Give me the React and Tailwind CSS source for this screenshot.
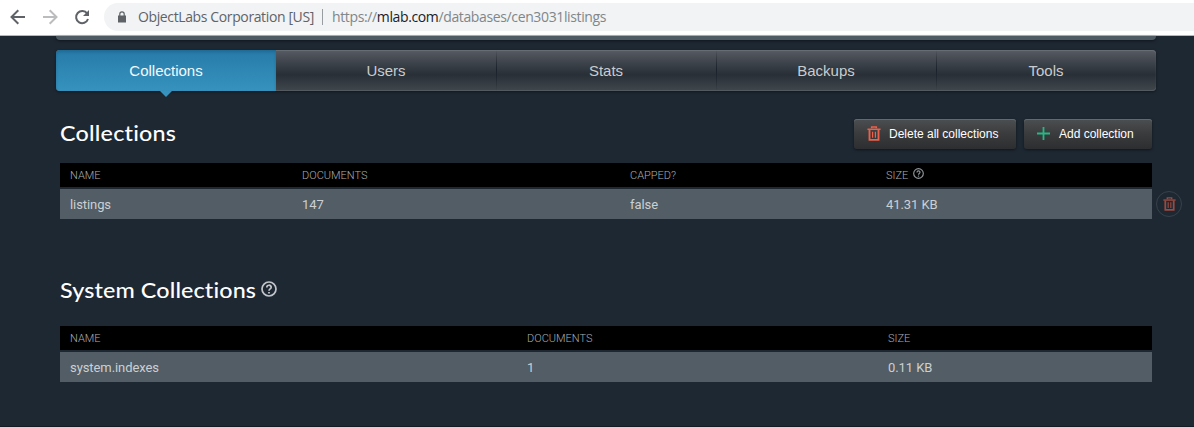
import React from "react";

function Trash({ className }) {
  return (
    <svg className={className} viewBox="0 0 14 16" fill="none" stroke="currentColor">
      <path d="M4.5 2.5V1h5v1.5" strokeWidth="1.6" />
      <path d="M0 3.5h14" strokeWidth="1.6" />
      <path d="M2.2 4v10.8h9.6V4" strokeWidth="2" />
      <path d="M5.5 6v6.5M8.5 6v6.5" strokeWidth="1.3" />
    </svg>
  );
}

function Help({ className }) {
  return (
    <svg className={className} viewBox="0 0 16 16" fill="none" stroke="currentColor">
      <circle cx="8" cy="8" r="7" strokeWidth="1.7" />
      <path d="M5.8 6.5C5.8 3.5 10.2 3.5 10.2 6.3C10.2 8 8 7.9 8 9.8" strokeWidth="1.7" />
      <path d="M8 11v1.6" strokeWidth="1.8" />
    </svg>
  );
}

function BrowserBar() {
  return (
    <div className="flex h-9 border-b border-[#b4b8ba] bg-white font-['Open_Sans',sans-serif] text-[14px] text-[#5f6368]">
      <div className="flex w-[104px] shrink-0 items-center pb-px pl-[10px]">
        <svg className="h-4 w-4" viewBox="0 0 16 16" fill="none" stroke="#5f6368" strokeWidth="2">
          <path d="M15 8H2M8.3 1.2 1.5 8l6.8 6.8" />
        </svg>
        <svg className="ml-4 h-4 w-4" viewBox="0 0 16 16" fill="none" stroke="#babcbe" strokeWidth="2">
          <path d="M1 8h13M7.7 1.2 14.5 8l-6.8 6.8" />
        </svg>
        <svg className="ml-4 h-4 w-4" viewBox="0 0 16 16" fill="none">
          <path d="M13.2 4.6A6.1 6.1 0 1 0 14 10" stroke="#5f6368" strokeWidth="2" />
          <path d="M15 1v6H9z" fill="#5f6368" />
        </svg>
      </div>
      <div className="mt-[3px] flex h-7 flex-1 items-center rounded-l-full bg-[#f1f3f4] pl-[14px]">
        <svg className="h-3 w-2 shrink-0" viewBox="0 0 8 12" fill="none">
          <path d="M1.8 5V3a2.2 2.2 0 0 1 4.4 0v2" stroke="#5f6368" strokeWidth="1.2" />
          <path d="M0 4.5h8V11.500H0z" fill="#5f6368" />
        </svg>
        <span className="-mt-px ml-3 w-[176px] whitespace-nowrap tracking-[-0.38px]">ObjectLabs Corporation [US]</span>
        <span className="ml-2 h-4 w-px bg-[#9a9da0]" />
        <span className="-mt-px ml-[9px] whitespace-nowrap tracking-[-0.37px] text-[#80868b]">
          https://<span className="text-[#202124]">mlab.com</span>/databases/cen3031listings
        </span>
      </div>
    </div>
  );
}

function Tabs() {
  return (
    <nav className="relative ml-[56px] mt-[10px] flex h-[41px] w-[1100px] rounded-[4px] bg-linear-to-b from-[#575b63] via-[#282f36] via-60% to-[#40474d] text-[15px] text-[#c9cccf] shadow-[0_1px_3px_rgba(0,0,0,0.45),inset_0_1px_1px_#6a6f76,inset_0_-1px_0_#535a60]">
      <div className="relative flex w-[220px] items-center justify-center rounded-l-[4px] bg-linear-to-b from-[#277ba8] to-[#3692be] pt-[2px] text-[#f4f9fc] shadow-[inset_0_2px_3px_rgba(15,75,110,0.35)]">
        Collections
        <span className="absolute left-[104px] top-[41px] h-0 w-0 border-x-[6px] border-t-[6px] border-x-transparent border-t-[#3692be]" />
      </div>
      {["Users", "Stats", "Backups", "Tools"].map((name, i) => (
        <div key={name} className="flex w-[220px] items-center">
          <span className="flex-1 pt-[2px] text-center">{name}</span>
          {i < 3 && <span className="-mr-px h-full w-px bg-linear-to-b from-transparent via-[#1b222b] to-transparent" />}
        </div>
      ))}
    </nav>
  );
}

function Button({ className, children }) {
  return (
    <button className={"flex h-[30px] items-center whitespace-nowrap rounded-[3px] bg-linear-to-b from-[#4c4f52] via-[#3a3b3c] to-[#2c2e31] text-[12px] text-white shadow-[0_1px_3px_rgba(0,0,0,0.5),inset_0_1px_0_#65696d] " + className}>
      {children}
    </button>
  );
}

function Table({ cols, heads, cells }) {
  return (
    <div className="w-[1092px] font-['Roboto',sans-serif]">
      <div className={"grid h-6 items-center bg-black text-[11px] font-light text-[#a9adb0] " + cols}>
        {heads.map((h, i) => (
          <div key={i} className="flex h-6 items-center pl-[10px] pt-[2px]">{h}</div>
        ))}
      </div>
      <div className={"mt-[2px] grid h-[30px] items-center bg-[#535d65] pt-px text-[13px] tracking-[-0.08px] text-[#cbd0d3] " + cols}>
        {cells.map((c, i) => (
          <div key={i} className="pl-[10px]">{c}</div>
        ))}
      </div>
    </div>
  );
}

export default function App() {
  return (
    <div className="h-[427px] w-[1194px] overflow-hidden border-b border-[#141b25] bg-[#1e2833] font-['Liberation_Sans',Arial,sans-serif]">
      <BrowserBar />
      <div className="ml-[56px] h-1 w-[1100px] rounded-b-[4px] bg-[#4f5b64] shadow-[0_1px_3px_rgba(0,0,0,0.5)]" />
      <Tabs />
      <main className="ml-[60px]">
        <div className="flex h-[72px] w-[1092px] items-start justify-between pt-7">
          <h1 className="-mt-px origin-left scale-x-[1.06] whitespace-nowrap font-['Lato',sans-serif] text-[22px] font-medium leading-[30px] tracking-[0.2px] text-white">Collections</h1>
          <div className="flex gap-2">
            <Button className="w-[162px] pl-[13px]">
              <Trash className="mr-2 h-[15px] w-[14px] -translate-y-px text-[#ed6049]" />
              Delete all collections
            </Button>
            <Button className="w-[128px] pl-[13px]">
              <svg className="mr-[9px] h-[13px] w-[13px] -translate-y-px" viewBox="0 0 13 13" stroke="#25b885" strokeWidth="1.8">
                <path d="M6.5 0v13M0 6.500h13" />
              </svg>
              Add collection
            </Button>
          </div>
        </div>
        <div className="flex items-end">
          <Table
            cols="grid-cols-[232px_328px_256px_276px]"
            heads={[
              "NAME",
              "DOCUMENTS",
              "CAPPED?",
              <React.Fragment key="size">
                SIZE
                <Help className="mb-[6px] ml-[5px] h-[11px] w-[11px] text-[#8f9599]" />
              </React.Fragment>,
            ]}
            cells={["listings", "147", "false", "41.31 KB"]}
          />
          <div className="mb-[2px] ml-1 flex h-[26px] w-[26px] items-center justify-center rounded-full border border-[#36414b] text-[#9c4a40]">
            <Trash className="h-[14px] w-[13px]" />
          </div>
        </div>
        <div className="flex h-[107px] items-start pt-[57px]">
          <h2 className="-mt-px w-[195px] whitespace-nowrap font-['Lato',sans-serif] text-[22px] font-medium leading-[30px] text-white">
            <span className="inline-block origin-left scale-x-[1.06] tracking-[0.12px]">System Collections</span>
          </h2>
          <Help className="ml-[6px] mt-[5px] h-4 w-4 text-[#c2c6ca]" />
        </div>
        <Table
          cols="grid-cols-[457px_361px_274px]"
          heads={["NAME", "DOCUMENTS", "SIZE"]}
          cells={["system.indexes", "1", "0.11 KB"]}
        />
      </main>
    </div>
  );
}
